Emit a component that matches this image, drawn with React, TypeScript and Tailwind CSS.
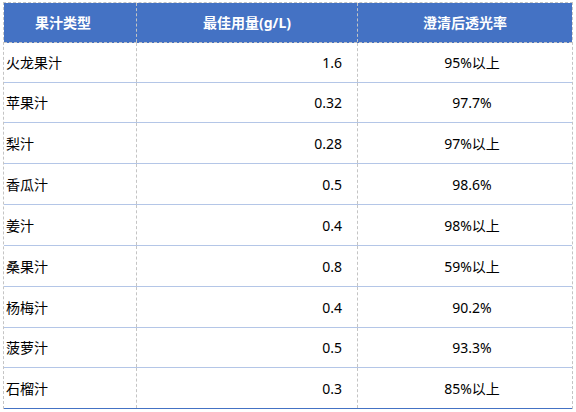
import React from "react";

const rows: { name: string; dose: string; rate: string; h: number }[] = [
  { name: "火龙果汁", dose: "1.6", rate: "95%以上", h: 40 },
  { name: "苹果汁", dose: "0.32", rate: "97.7%", h: 40 },
  { name: "梨汁", dose: "0.28", rate: "97%以上", h: 41 },
  { name: "香瓜汁", dose: "0.5", rate: "98.6%", h: 41 },
  { name: "姜汁", dose: "0.4", rate: "98%以上", h: 41 },
  { name: "桑果汁", dose: "0.8", rate: "59%以上", h: 41 },
  { name: "杨梅汁", dose: "0.4", rate: "90.2%", h: 41 },
  { name: "菠萝汁", dose: "0.5", rate: "93.3%", h: 40 },
  { name: "石榴汁", dose: "0.3", rate: "85%以上", h: 41 },
];

export default function App() {
  return (
    <div
      className="w-[576px] h-[412px] bg-white pt-[2px] pl-[3px]"
      style={{ fontFamily: '"Noto Sans", "Noto Sans CJK SC", sans-serif' }}
    >
      <div className="w-[570px] border-l border-r border-t border-dashed border-[#c4c4c4]">
        <div className="flex h-[40px] bg-[#4472c4] text-white font-bold text-[14px] border-b border-dashed border-[#c4c4c4]">
          <div className="w-[132px] flex items-center justify-center pr-[14px]">果汁类型</div>
          <div className="w-[221px] flex items-center justify-center border-l border-dashed border-[#c4c4c4]">最佳用量(g/L)</div>
          <div className="flex-1 flex items-center justify-center border-l border-dashed border-[#c4c4c4]">澄清后透光率</div>
        </div>
        {rows.map((r, i) => (
          <div
            key={r.name}
            className={
              "flex text-[14px] text-black border-b " +
              (i === rows.length - 1 ? "border-[#4472c4]" : "border-[#b4c6e7]")
            }
            style={{ height: r.h }}
          >
            <div className="w-[132px] flex items-center pl-[2px]">{r.name}</div>
            <div className="w-[221px] flex items-center justify-end pr-[15px] border-l border-dashed border-[#c4c4c4]">{r.dose}</div>
            <div className="flex-1 flex items-center justify-center pl-[14px] border-l border-dashed border-[#c4c4c4]">{r.rate}</div>
          </div>
        ))}
      </div>
    </div>
  );
}
